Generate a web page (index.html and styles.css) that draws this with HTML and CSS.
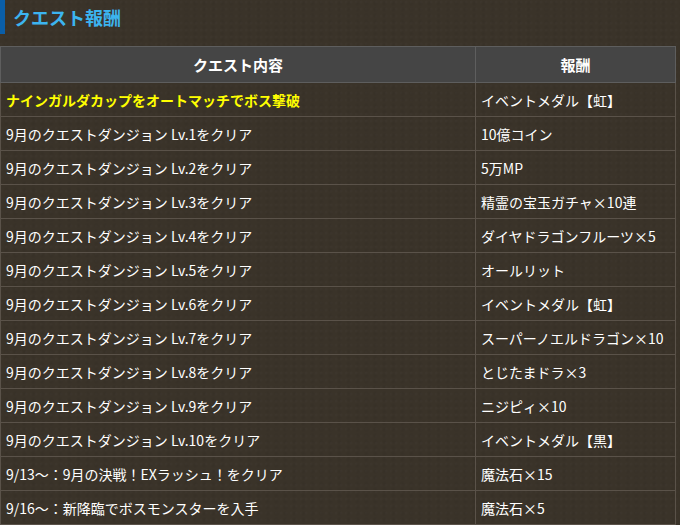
FILE: index.html
```html
<!DOCTYPE html>
<html lang="ja">
<head>
<meta charset="utf-8">
<link rel="stylesheet" href="styles.css">
</head>
<body>
<div class="page">
  <h2 class="title">クエスト報酬</h2>
  <table class="quests">
    <thead>
      <tr><th class="c1">クエスト内容</th><th class="c2">報酬</th></tr>
    </thead>
    <tbody>
      <tr class="hl"><td>ナインガルダカップをオートマッチでボス撃破</td><td class="rw">イベントメダル【虹】</td></tr>
      <tr><td>9月のクエストダンジョン Lv.1をクリア</td><td>10億コイン</td></tr>
      <tr><td>9月のクエストダンジョン Lv.2をクリア</td><td>5万MP</td></tr>
      <tr><td>9月のクエストダンジョン Lv.3をクリア</td><td>精霊の宝玉ガチャ×10連</td></tr>
      <tr><td>9月のクエストダンジョン Lv.4をクリア</td><td>ダイヤドラゴンフルーツ×5</td></tr>
      <tr><td>9月のクエストダンジョン Lv.5をクリア</td><td>オールリット</td></tr>
      <tr><td>9月のクエストダンジョン Lv.6をクリア</td><td>イベントメダル【虹】</td></tr>
      <tr><td>9月のクエストダンジョン Lv.7をクリア</td><td>スーパーノエルドラゴン×10</td></tr>
      <tr><td>9月のクエストダンジョン Lv.8をクリア</td><td>とじたまドラ×3</td></tr>
      <tr><td>9月のクエストダンジョン Lv.9をクリア</td><td>ニジピィ×10</td></tr>
      <tr><td>9月のクエストダンジョン Lv.10をクリア</td><td>イベントメダル【黒】</td></tr>
      <tr><td>9/13～：9月の決戦！EXラッシュ！をクリア</td><td>魔法石×15</td></tr>
      <tr><td>9/16～：新降臨でボスモンスターを入手</td><td>魔法石×5</td></tr>
    </tbody>
  </table>
</div>
</body>
</html>
```
FILE: styles.css
```css
html, body {
  margin: 0;
  padding: 0;
}
body {
  background-color: #3a3329;
  background-image:
    radial-gradient(circle at 20% 30%, rgba(255,255,255,0.02) 0, rgba(0,0,0,0) 2px),
    radial-gradient(circle at 70% 60%, rgba(0,0,0,0.05) 0, rgba(0,0,0,0) 3px);
  background-size: 5px 7px, 9px 6px;
  font-family: "Noto Sans CJK JP", "Noto Sans", sans-serif;
  color: #ffffff;
  width: 680px;
  height: 525px;
  overflow: hidden;
}
.title {
  margin: 0 0 12px 0;
  height: 34px;
  line-height: 34px;
  border-left: 5px solid #0a5ea8;
  padding-left: 8px;
  font-size: 18px;
  font-weight: bold;
  color: #3cb4f0;
}
.quests {
  width: 676px;
  border-collapse: collapse;
  table-layout: fixed;
  font-size: 14px;
}
.quests th, .quests td {
  border: 1px solid #5a5249;
  padding: 0 5px;
  text-align: left;
  white-space: nowrap;
}
.quests th {
  background: #454545;
  height: 35px;
  font-size: 15px;
  font-weight: bold;
  text-align: center;
  border-color: #5e5e5e;
}
.quests .c1 { width: 464px; }
.quests td {
  height: 33px;
  line-height: 20px;
}
.quests tr.hl td:first-child {
  color: #ffff00;
  font-weight: bold;
}
```
